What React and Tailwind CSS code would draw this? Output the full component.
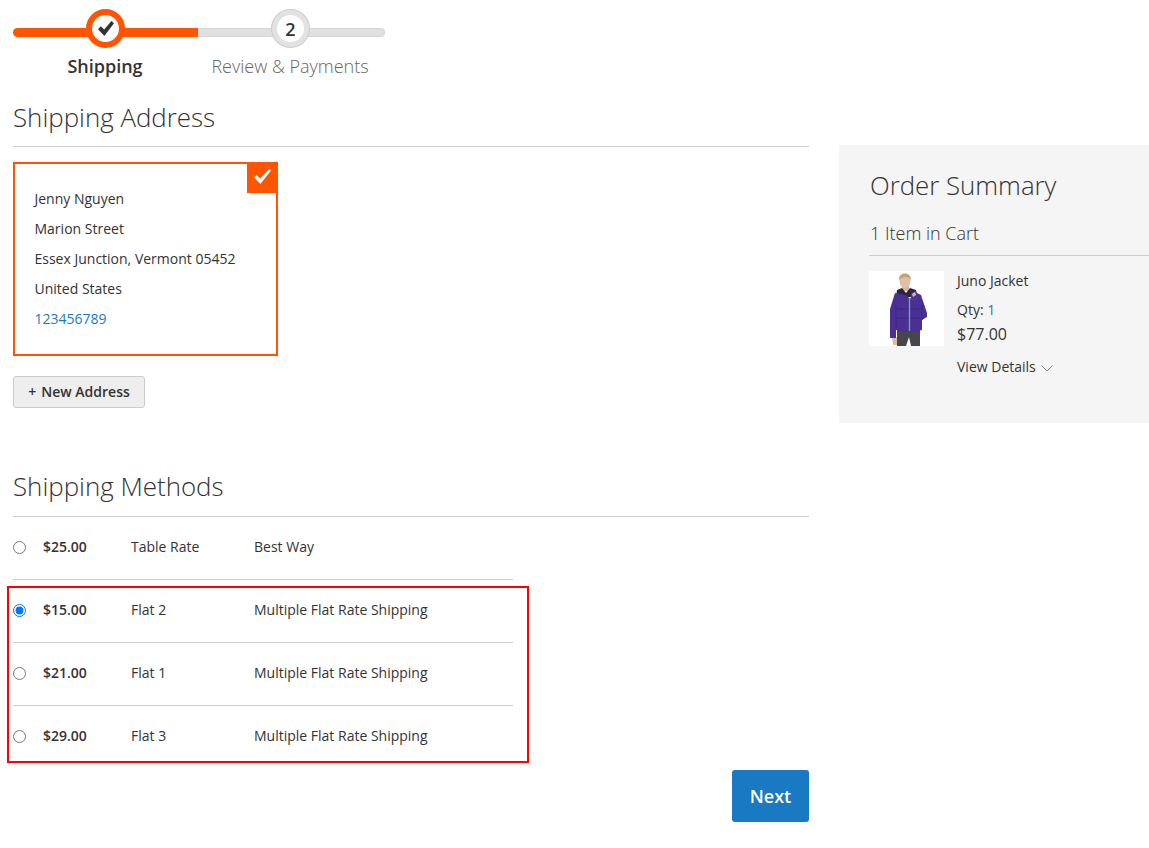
import React from 'react';

const methods = [
  { price: '$25.00', carrier: 'Table Rate', title: 'Best Way' },
  { price: '$15.00', carrier: 'Flat 2', title: 'Multiple Flat Rate Shipping', checked: true },
  { price: '$21.00', carrier: 'Flat 1', title: 'Multiple Flat Rate Shipping' },
  { price: '$29.00', carrier: 'Flat 3', title: 'Multiple Flat Rate Shipping' },
];

const addressLines = ['Jenny Nguyen', 'Marion Street', 'Essex Junction, Vermont 05452', 'United States'];

const CheckMark = ({ className, color }) => (
  <svg viewBox="0 0 16 15" className={className}>
    <path d="M0 8.2 L2.8 5.2 L6.2 8.4 L13.4 0 L16 2.2 L6.4 15 Z" fill={color} />
  </svg>
);

const JacketPhoto = () => (
  <svg viewBox="0 0 75 75" className="h-[75px] w-[75px] bg-white">
    <g className="blur-[0.5px]">
      <path d="M28 58 L51 58 L51 75 L42 75 L40 66 L37 75 L28 75 Z" fill="#47464a" />
      <path d="M23 66 L28 66 L28 74 L24 74 Z" fill="#dcbba4" />
      <path d="M33 13 L40 13 L40 20 L33 20 Z" fill="#d9b49a" />
      <ellipse cx="36" cy="10" rx="5.5" ry="7" fill="#e0bfa8" />
      <path d="M30 9 C29 1 42 0 42 9 C40 5 33 5 30 9 Z" fill="#bfa371" />
      <path d="M28 19 L33 17 L37 22 L41 17 L47 19 L48 26 L27 26 Z" fill="#2c2740" />
      <path d="M26 22 L37 24 L41 28 L46 21 L52 24 L58 42 L58 46 L53 49 L53 59 C45 61 35 61 27 59 L27 67 L21 67 L21 38 Z" fill="#4a2f94" />
      <path d="M27 34 L27 58 M53 34 L53 49 M28 38 L52 38 M28 47 L52 47" stroke="#3b2479" strokeWidth="0.8" fill="none" />
      <path d="M40.5 27 L40.5 60" stroke="#5cb598" strokeWidth="1.3" />
      <path d="M42 22 L47 20 L49 27 L45 31 L42 28 Z" fill="#503399" />
      <path d="M43 23 L46 21 L47 24 L44 26 Z" fill="#dcbba4" />
    </g>
  </svg>
);

export default function App() {
  return (
    <div className="relative h-[848px] overflow-hidden bg-white font-['Open_Sans',sans-serif] text-sm text-[#333333]">
      {/* Progress bar */}
      <div className="ml-[13px] flex w-[372px] pt-[28px]">
        <div className="relative flex w-[185px] flex-col items-center">
          <div className="h-[9px] w-full rounded-l-full bg-[#ff5501]" />
          <div className="absolute left-[73px] top-[-19px] flex h-[39px] w-[39px] items-center justify-center rounded-full border-[6px] border-[#ff5501] bg-white">
            <CheckMark className="h-[15px] w-[16px]" color="#333333" />
          </div>
          <span className="mt-[16px] whitespace-nowrap pr-[1px] text-lg leading-[26px] font-semibold">Shipping</span>
        </div>
        <div className="relative flex w-[187px] flex-col items-center">
          <div className="h-[9px] w-full rounded-r-full border border-l-0 border-[#d4d4d4] bg-[#e0e0e0]" />
          <div className="absolute left-[74px] top-[-18px] flex h-[37px] w-[37px] items-center justify-center rounded-full border-[5px] border-[#e2e2e2] bg-white text-lg font-semibold shadow-[0_0_0_1px_#cccccc]">
            2
          </div>
          <span className="mt-[16px] whitespace-nowrap pr-[3px] text-lg leading-[26px] font-light text-[#666666]">Review &amp; Payments</span>
        </div>
      </div>

      <div className="flex items-start">
        {/* Main column */}
        <div className="ml-[13px] w-[796px]">
          <h2 className="mt-[22px] border-b border-[#cccccc] pb-[12px] text-[25.9px] leading-[33px] font-light">Shipping Address</h2>

          <div className="relative mt-[15px] h-[194px] w-[265px] border-2 border-[#ff5501] px-[19.5px] pt-[20px]">
            <div className="absolute right-[-2px] top-[-2px] flex h-[31px] w-[31px] items-center justify-center bg-[#ff5501] pb-[2px] pr-[1px]">
              <svg viewBox="0 0 17 15" className="h-[15px] w-[17px]">
                <path d="M0 8.4 L2.4 6 L6.2 9.6 L15.4 0 L17 1.4 L6.4 15 Z" fill="#ffffff" />
              </svg>
            </div>
            {addressLines.map((line) => (
              <div key={line} className="leading-[30px]">{line}</div>
            ))}
            <a className="leading-[30px] text-[#1979c3]">123456789</a>
          </div>

          <button className="mt-[20px] flex h-[32px] w-[132px] items-center justify-center rounded-[3px] border border-[#cccccc] bg-[#eeeeee] font-semibold">
            <span className="mr-[5px]">+</span>New Address
          </button>

          <h2 className="mt-[62px] border-b border-[#cccccc] pb-[13px] text-[25.9px] leading-[33px] font-light">Shipping Methods</h2>

          <div className="w-[500px]">
            {methods.map((m, i) => (
              <div key={m.price} className={`flex h-[63px] items-center border-b pb-[2px] ${i < methods.length - 1 ? 'border-[#cccccc]' : 'border-transparent'}`}>
                <input type="radio" name="method" defaultChecked={m.checked} className="m-0 h-[13px] w-[13px]" />
                <span className="ml-[17px] w-[88px] font-semibold">{m.price}</span>
                <span className="w-[123px]">{m.carrier}</span>
                <span>{m.title}</span>
              </div>
            ))}
          </div>

          <div className="mt-[1px] flex justify-end">
            <button className="h-[52px] w-[77px] rounded-[3px] bg-[#1979c3] text-lg font-semibold text-white">Next</button>
          </div>
        </div>

        {/* Order summary */}
        <aside className="ml-[30px] mt-[66px] h-[278px] w-[310px] bg-[#f5f5f5] pl-[30px] pt-[24px]">
          <h2 className="pl-[1px] text-[25.8px] leading-[33px] font-light">Order Summary</h2>
          <div className="mt-[19px] border-b border-[#cccccc] pb-[10px] pl-[1px] text-lg leading-[24px] font-light">1 Item in Cart</div>
          <div className="mt-[15px] flex">
            <JacketPhoto />
            <div className="ml-[13px]">
              <div className="leading-[20px]">Juno Jacket</div>
              <div className="mt-[9px] leading-[20px]">Qty: <span className="text-[#1979c3]">1</span></div>
              <div className="mt-[4px] text-base leading-[20px]">$77.00</div>
              <div className="mt-[13px] flex items-center leading-[20px]">
                View Details
                <svg viewBox="0 0 12 7" className="ml-[5px] mt-[2px] h-[7px] w-[12px]">
                  <path d="M0.5 0.5 L6 6 L11.5 0.5" fill="none" stroke="#858585" strokeWidth="1" />
                </svg>
              </div>
            </div>
          </div>
        </aside>
      </div>

      {/* Red annotation box */}
      <div className="absolute left-[7px] top-[586px] h-[177px] w-[522px] border-2 border-[#ff0000]" />
    </div>
  );
}
